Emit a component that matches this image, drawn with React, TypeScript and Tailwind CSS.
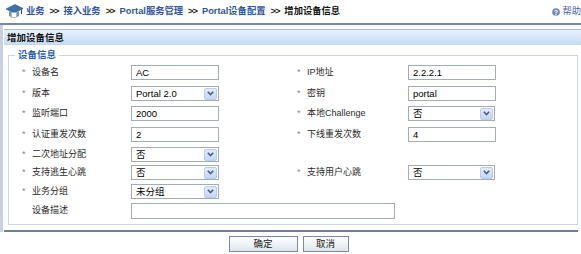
import React from 'react';

const font = { fontFamily: '"Liberation Sans", "Noto Sans CJK SC", sans-serif' };

function Field({ value }: { value: string }) {
  return (
    <div className="h-[15px] w-[88px] border border-[#a5acb5] bg-white px-[4px] text-[9.5px] leading-[13px] text-black">
      {value}
    </div>
  );
}

function Select({ value, w = 'w-[88px]' }: { value: string; w?: string }) {
  return (
    <div className={`flex h-[15px] ${w} items-center justify-between border border-[#a5acb5] bg-white pl-[4px] text-[9.5px] leading-[13px] text-black`}>
      <span>{value}</span>
      <span className="mr-[1px] flex h-[12px] w-[13px] items-center justify-center rounded-[2px] border border-[#b8cdf5] bg-gradient-to-b from-[#e3ecfd] to-[#c3d5f8]">
        <svg width="7" height="5" viewBox="0 0 7 5">
          <path d="M0.8 0.8 L3.5 3.6 L6.2 0.8" fill="none" stroke="#4a5d8a" strokeWidth="1.6" />
        </svg>
      </span>
    </div>
  );
}

function Label({ text, star = true }: { text: string; star?: boolean }) {
  return (
    <div className="flex h-[14px] items-center pt-[1px] text-[9px] text-[#2a2a2a]">
      <span className="w-[10px] text-[9px] leading-none text-[#8a86a8]">{star ? '*' : ''}</span>
      <span>{text}</span>
    </div>
  );
}

type Row = {
  h: string;
  left: [string, React.ReactNode];
  right?: [string, React.ReactNode];
};

const rows: Row[] = [
  { h: 'h-[21px]', left: ['设备名', <Field value="AC" />], right: ['IP地址', <Field value="2.2.2.1" />] },
  { h: 'h-[20px]', left: ['版本', <Select value="Portal 2.0" />], right: ['密钥', <Field value="portal" />] },
  { h: 'h-[21px]', left: ['监听端口', <Field value="2000" />], right: ['本地Challenge', <Select value="否" w="w-[87px]" />] },
  { h: 'h-[20px]', left: ['认证重发次数', <Field value="2" />], right: ['下线重发次数', <Field value="4" />] },
  { h: 'h-[18px]', left: ['二次地址分配', <Select value="否" />] },
  { h: 'h-[19px]', left: ['支持逃生心跳', <Select value="否" />], right: ['支持用户心跳', <Select value="否" w="w-[87px]" />] },
  { h: 'h-[19px]', left: ['业务分组', <Select value="未分组" />] },
];

function HelpIcon() {
  return (
    <svg width="8" height="8" viewBox="0 0 9 9">
      <circle cx="4.5" cy="4.5" r="4.3" fill="#6b86b5" />
      <text x="4.5" y="7.5" textAnchor="middle" fontSize="8" fontWeight="bold" fill="#fff" fontFamily="Liberation Sans">?</text>
    </svg>
  );
}

function CapIcon() {
  return (
    <svg width="19" height="17" viewBox="0 0 19 17">
      <path d="M1 6 L10 1.5 L18 5.5 L9 10 Z" fill="#3f6fae" stroke="#2b4f85" strokeWidth="0.6" />
      <path d="M4 8 L4 13 Q9 16 14 13 L14 8 L9 10.5 Z" fill="#6d94c6" />
      <rect x="6.5" y="9.5" width="5" height="5" fill="#fff" stroke="#9bb0cc" strokeWidth="0.6" />
      <path d="M16.5 6.3 L16.5 11" stroke="#2b4f85" strokeWidth="1" />
    </svg>
  );
}

function Sep() {
  return <span className="tracking-[-1px] text-[#222]">&gt;&gt;</span>;
}

export default function App() {
  return (
    <div className="relative h-[254px] w-[581px] overflow-hidden bg-white" style={font}>
      <div className="flex h-[23px] items-center pl-[5px] text-[9.3px] font-bold">
        <CapIcon />
        <div className="ml-[2px] flex items-center gap-[5px]">
          <span className="text-[#2f55a4]">业务</span>
          <Sep />
          <span className="text-[#2f55a4]">接入业务</span>
          <Sep />
          <span className="text-[#2f55a4]">Portal服务管理</span>
          <Sep />
          <span className="text-[#2f55a4]">Portal设备配置</span>
          <Sep />
          <span className="text-[#111]">增加设备信息</span>
        </div>
        <div className="ml-auto flex items-center gap-[2px] font-normal text-[#4a64a0]">
          <HelpIcon />
          <span>帮助</span>
        </div>
      </div>
      <div className="h-[2px] bg-[#7486bd]" />
      <div className="border-l-[3px] border-[#c6d2e3] pl-[1px] pt-[4px]">
        <div className="h-[16px] border-t border-[#a9bad6] bg-gradient-to-b from-[#e9f2fd] to-[#c4daf5] pl-[3px] text-[9.5px] font-bold leading-[15px] text-[#111]">
          增加设备信息
        </div>
        <div className="mr-[3px] border-b-2 border-[#6f7f99] pb-[5px] pl-[4px] pt-[3px]">
          <fieldset className="h-[177px] border border-[#cbd7e6] pl-[13px] pt-[3px]">
            <legend className="-ml-[7px] px-[3px] text-[9.5px] font-bold text-[#2d5db5]">设备信息</legend>
            <div className="flex flex-col">
              {rows.map((r, i) => (
                <div key={i} className={`flex items-start ${r.h}`}>
                  <div className="w-[109px]">
                    <Label text={r.left[0]} />
                  </div>
                  {r.left[1]}
                  {r.right && (
                    <>
                      <div className="ml-[78px] w-[111px]">
                        <Label text={r.right[0]} />
                      </div>
                      {r.right[1]}
                    </>
                  )}
                </div>
              ))}
              <div className="flex h-[19px] items-start">
                <div className="w-[109px]">
                  <Label text="设备描述" star={false} />
                </div>
                <div className="h-[16px] w-[264px] border border-[#a5acb5] bg-white" />
              </div>
            </div>
          </fieldset>
        </div>
      </div>
      <div className="mt-[4px] flex justify-center gap-[5px] pr-[4px]">
        <button className="h-[16px] w-[69px] border border-[#7b8ba5] bg-gradient-to-b from-[#ffffff] to-[#dfe5ee] text-[9.5px] leading-[14px] text-[#222]">
          确定
        </button>
        <button className="h-[16px] w-[46px] border border-[#7b8ba5] bg-gradient-to-b from-[#ffffff] to-[#dfe5ee] text-[9.5px] leading-[14px] text-[#222]">
          取消
        </button>
      </div>
    </div>
  );
}
